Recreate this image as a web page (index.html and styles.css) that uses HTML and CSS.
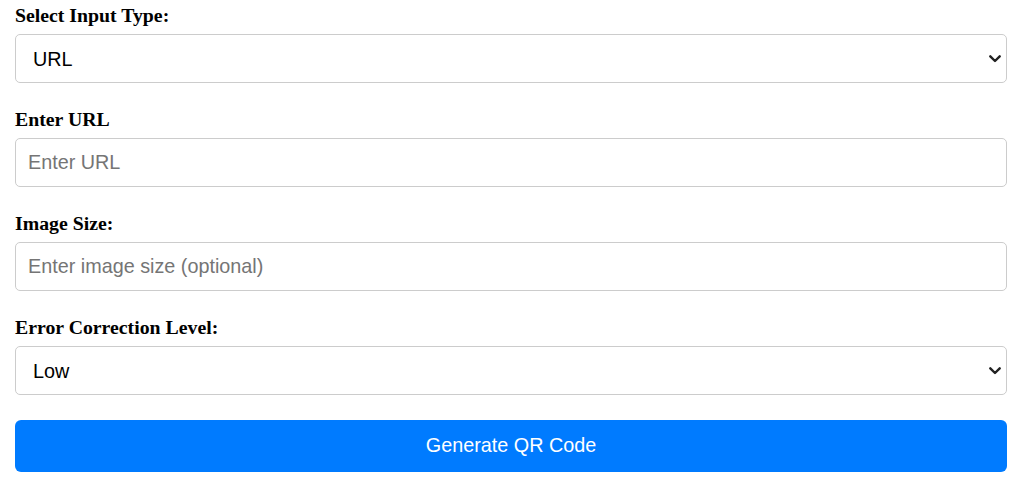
FILE: index.html
```html
<!DOCTYPE html>
<html lang="en">
<head>
<meta charset="utf-8">
<title>QR Code Generator</title>
<link rel="stylesheet" href="styles.css">
</head>
<body>
<form class="qr-form">
  <div class="field">
    <label class="field-label" for="type">Select Input Type:</label>
    <div class="select-wrap">
      <select id="type" class="control select">
        <option>URL</option>
        <option>Text</option>
      </select>
      <svg class="chevron" width="12" height="8" viewBox="0 0 12 8" aria-hidden="true"><path d="M1.3 1.3 L6 6 L10.7 1.3" fill="none" stroke="#222" stroke-width="2.4" stroke-linecap="round" stroke-linejoin="round"/></svg>
    </div>
  </div>
  <div class="field">
    <label class="field-label" for="url">Enter URL</label>
    <input id="url" class="control" type="text" placeholder="Enter URL">
  </div>
  <div class="field">
    <label class="field-label" for="size">Image Size:</label>
    <input id="size" class="control" type="text" placeholder="Enter image size (optional)">
  </div>
  <div class="field">
    <label class="field-label" for="level">Error Correction Level:</label>
    <div class="select-wrap">
      <select id="level" class="control select">
        <option>Low</option>
        <option>Medium</option>
      </select>
      <svg class="chevron" width="12" height="8" viewBox="0 0 12 8" aria-hidden="true"><path d="M1.3 1.3 L6 6 L10.7 1.3" fill="none" stroke="#222" stroke-width="2.4" stroke-linecap="round" stroke-linejoin="round"/></svg>
    </div>
  </div>
  <button type="button" class="submit">Generate QR Code</button>
</form>
</body>
</html>
```

FILE: styles.css
```css
html, body {
  margin: 0;
  padding: 0;
  background: #fff;
}

.qr-form {
  padding: 7px 17px 0 15px;
  display: flex;
  flex-direction: column;
}

.field {
  display: flex;
  flex-direction: column;
  margin-bottom: 28px;
}

.field:last-of-type {
  margin-bottom: 25px;
}

.field-label {
  font-family: "Liberation Serif", "Times New Roman", serif;
  font-weight: bold;
  font-size: 19.8px;
  line-height: 17px;
  color: #000;
  margin-bottom: 10px;
}

.control {
  box-sizing: border-box;
  width: 100%;
  height: 49px;
  margin: 0;
  padding: 0 12px;
  border: 1px solid #cccccc;
  border-radius: 5px;
  background: #fff;
  font-family: "Liberation Sans", Arial, sans-serif;
  font-size: 19.8px;
  color: #000;
}

.control::placeholder {
  color: #757575;
}

.select-wrap {
  position: relative;
}

.select {
  display: block;
  appearance: none;
  -webkit-appearance: none;
  padding-left: 17px;
  padding-right: 30px;
}

.chevron {
  position: absolute;
  right: 6px;
  top: 50%;
  transform: translateY(-50%);
  pointer-events: none;
}

.submit {
  box-sizing: border-box;
  width: 100%;
  height: 52px;
  border: none;
  border-radius: 6px;
  background: #007bff;
  color: #fff;
  font-family: "Liberation Sans", Arial, sans-serif;
  font-size: 19.8px;
  padding-bottom: 2px;
  cursor: pointer;
}
```
